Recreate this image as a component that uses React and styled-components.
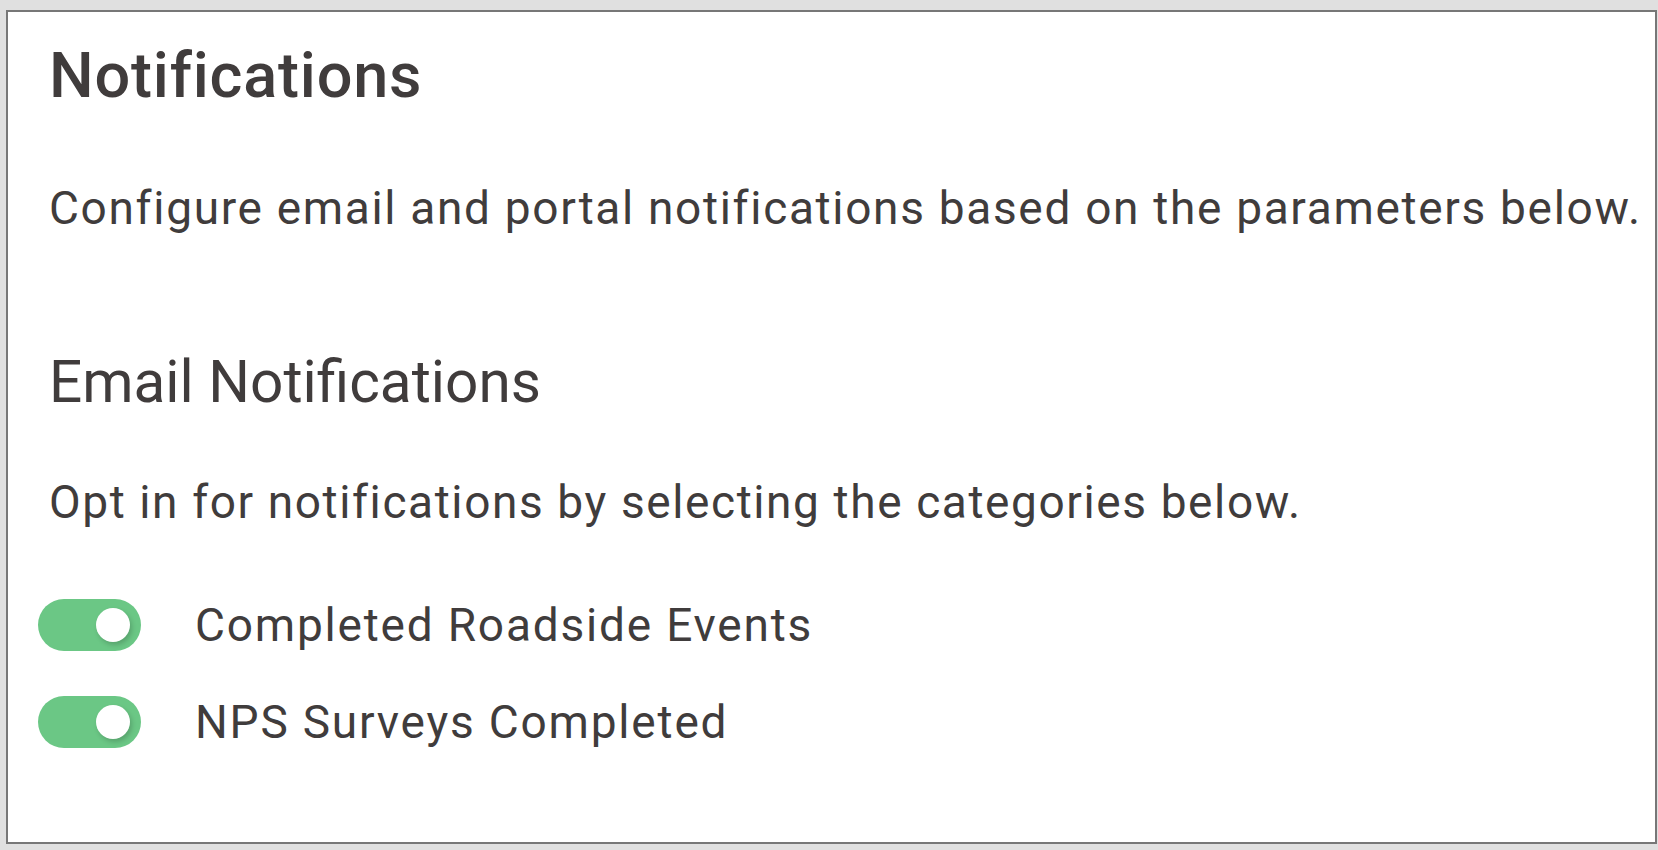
import React, { useState } from "react";
import styled, { createGlobalStyle } from "styled-components";

const GlobalStyle = createGlobalStyle`
  html, body {
    margin: 0;
    padding: 0;
    background: #e0e0e0;
  }
  body {
    font-family: Roboto, "Liberation Sans", sans-serif;
    color: #403c3c;
  }
`;

const Page = styled.div`
  padding: 10px 1px 6px 6px;
  height: 850px;
  box-sizing: border-box;
`;

const Panel = styled.section`
  height: 100%;
  box-sizing: border-box;
  background: #fff;
  border: 2px solid #777;
  padding: 32px 20px 0 41px;
  display: flex;
  flex-direction: column;
`;

const Title = styled.h1`
  margin: 0;
  font-size: 63px;
  line-height: 1;
  font-weight: 500;
  letter-spacing: 0.8px;
`;

const Text = styled.p`
  margin: ${(p) => p.$top}px 0 0;
  font-size: 46px;
  line-height: 1;
  font-weight: 400;
  letter-spacing: ${(p) => p.$spacing || 1.6}px;
  white-space: nowrap;
`;

const Subtitle = styled.h2`
  margin: 122px 0 0;
  font-size: 58.5px;
  line-height: 1;
  font-weight: 400;
`;

const ToggleList = styled.div`
  margin-top: 74px;
  display: flex;
  flex-direction: column;
  gap: 45px;
`;

const ToggleRow = styled.label`
  display: flex;
  align-items: center;
  gap: 54px;
  margin-left: -11px;
  height: 52px;
  cursor: pointer;
`;

const Track = styled.span`
  position: relative;
  flex: none;
  width: 103px;
  height: 52px;
  border-radius: 26px;
  background: ${(p) => (p.$on ? "#6bc785" : "#c9c9c9")};
`;

const Knob = styled.span`
  position: absolute;
  top: 9px;
  left: ${(p) => (p.$on ? "58px" : "11px")};
  width: 34px;
  height: 34px;
  border-radius: 50%;
  background: #fff;
  box-shadow: 2px 3px 5px rgba(0, 0, 0, 0.18);
`;

const Label = styled.span`
  font-size: 46px;
  line-height: 1;
  letter-spacing: 1.8px;
`;

const categories = ["Completed Roadside Events", "NPS Surveys Completed"];

export default function App() {
  const [enabled, setEnabled] = useState({ 0: true, 1: true });

  return (
    <>
      <GlobalStyle />
      <Page>
        <Panel>
          <Title>Notifications</Title>
          <Text $top={78} $spacing={1.68}>
            Configure email and portal notifications based on the parameters below.
          </Text>
          <Subtitle>Email Notifications</Subtitle>
          <Text $top={67}>Opt in for notifications by selecting the categories below.</Text>
          <ToggleList>
            {categories.map((name, i) => (
              <ToggleRow
                key={name}
                onClick={() => setEnabled((s) => ({ ...s, [i]: !s[i] }))}
              >
                <Track $on={enabled[i]}>
                  <Knob $on={enabled[i]} />
                </Track>
                <Label>{name}</Label>
              </ToggleRow>
            ))}
          </ToggleList>
        </Panel>
      </Page>
    </>
  );
}
